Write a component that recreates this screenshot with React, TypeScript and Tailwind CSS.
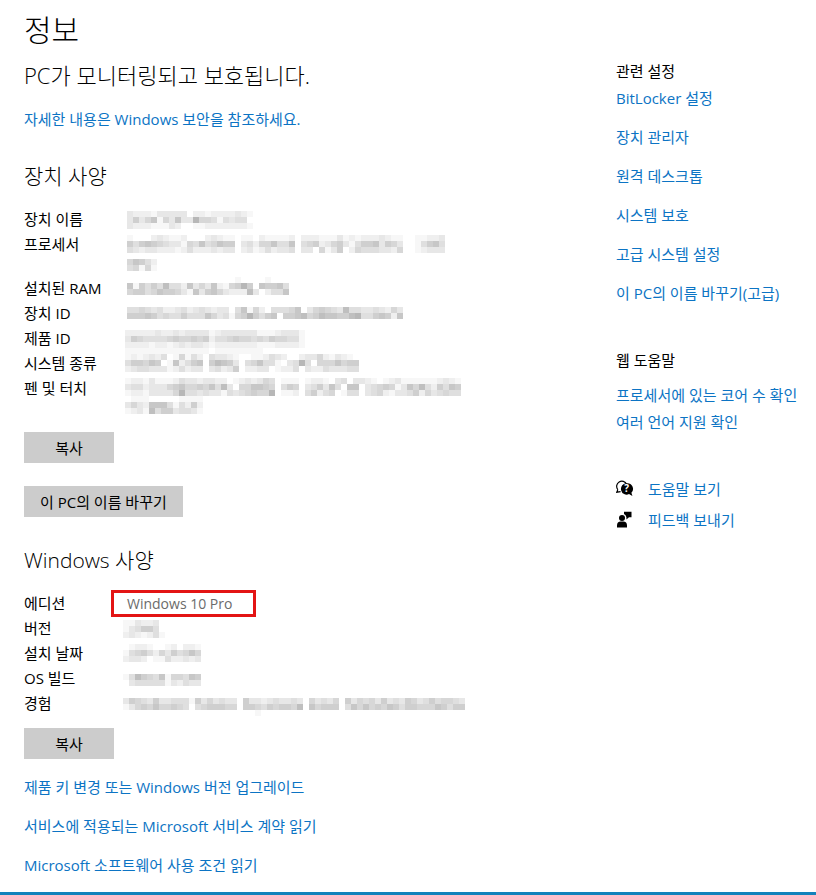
import type { ReactNode } from "react";

const CELL = 6;

interface MosaicProps {
  label: string;
  x: number;
  y: number;
  rows: string[];
}

interface SpecRow {
  name: string;
  value: ReactNode;
  tall?: boolean;
}

// Each digit is one block, 0 is empty and 9 is the darkest grey.
function Mosaic({ label, x, y, rows }: MosaicProps) {
  return (
    <svg role="img" aria-label={label} width="1" height="1" className="block overflow-visible" shapeRendering="crispEdges">
      {rows.map((row, r) =>
        row.split("").map((digit, c) => {
          const level = 255 - Number(digit) * 8;
          if (digit === "0") return null;
          return (
            <rect
              key={`${r}-${c}`}
              x={x + c * CELL}
              y={y + r * CELL}
              width={CELL}
              height={CELL}
              fill={`rgb(${level},${level},${level})`}
            />
          );
        }),
      )}
    </svg>
  );
}

const deviceSpecs: SpecRow[] = [
  {
    name: "장치 이름",
    value: (
      <Mosaic
        label="장치 이름 숨김"
        x={0}
        y={4}
        rows={["322213333302212222321", "363571537339554143440", "322211132001122222221"]}
      />
    ),
  },
  {
    name: "프로세서",
    tall: true,
    value: (
      <Mosaic
        label="프로세서 숨김"
        x={0}
        y={3}
        rows={[
          "10002321120002321101102111120222111312122232110011223",
          "64676543315474576603425574470456235631466736530014674",
          "43233222124222323302312423340330513602544433250012333",
          "",
          "57642",
          "45151",
        ]}
      />
    ),
  },
  {
    name: "설치된 RAM",
    value: (
      <Mosaic
        label="설치된 RAM 숨김"
        x={0}
        y={1}
        rows={["000000000000000000100001000", "716464844273537215696076674", "566457665317367532228302447"]}
      />
    ),
  },
  {
    name: "장치 ID",
    value: (
      <Mosaic
        label="장치 ID 숨김"
        x={0}
        y={6}
        rows={[
          "4454342234234323304715204445703565438443343253",
          "6667645446444753415696467066785687766894467627",
        ]}
      />
    ),
  },
  {
    name: "제품 ID",
    value: (
      <Mosaic
        label="제품 ID 숨김"
        x={-2}
        y={4}
        rows={[
          "222223223233331233333311123331",
          "365444456556562445655454655441",
          "222212212323321222222211122221",
          "111111111111110111111110000000",
        ]}
      />
    ),
  },
  {
    name: "시스템 종류",
    value: (
      <Mosaic
        label="시스템 종류 숨김"
        x={-2}
        y={3}
        rows={[
          "121232401514204332100112432002335213210",
          "466576017246706876304574410349405557566",
          "234433312423303423602233012240322433344",
        ]}
      />
    ),
  },
  {
    name: "펜 및 터치",
    tall: true,
    value: (
      <Mosaic
        label="펜 및 터치 숨김"
        x={-2}
        y={2}
        rows={[
          "12213111243323322012323540111012210340332101231111112321",
          "34423335675565748305577650465034637407703456513758426476",
          "12213333594434331434565590112046245014403452133462534544",
          "01110000011110",
          "3532777414262",
          "1231846634431",
        ]}
      />
    ),
  },
];

const windowsSpecs: SpecRow[] = [
  {
    name: "에디션",
    value: (
      <span className="relative block text-[14px] text-[#6b6b6b]">
        Windows 10 Pro
        <span className="absolute -left-4 -top-px h-[27px] w-[145px] border-3 border-[#e31414]" />
      </span>
    ),
  },
  { name: "버전", value: <Mosaic label="버전 숨김" x={-4} y={4} rows={["1132230", "1346640", "2321241"]} /> },
  {
    name: "설치 날짜",
    value: (
      <Mosaic label="설치 날짜 숨김" x={-4} y={3} rows={["0122100120221", "1456425364575", "2332011422323"]} />
    ),
  },
  {
    name: "OS 빌드",
    value: <Mosaic label="OS 빌드 숨김" x={-4} y={8} rows={["1486547155476", "0344444132433"]} />,
  },
  {
    name: "경험",
    value: (
      <Mosaic
        label="경험 숨김"
        x={-4}
        y={7}
        rows={[
          "365436334441635343306332343343053435063545363436534645543",
          "135657556540456665506654656658075666047575657646655576466",
          "000000000000000000000010",
        ]}
      />
    ),
  },
];

const relatedLinks = ["BitLocker 설정", "장치 관리자", "원격 데스크톱", "시스템 보호", "고급 시스템 설정", "이 PC의 이름 바꾸기(고급)"];
const webLinks = ["프로세서에 있는 코어 수 확인", "여러 언어 지원 확인"];
const licenseLinks = [
  "제품 키 변경 또는 Windows 버전 업그레이드",
  "서비스에 적용되는 Microsoft 서비스 계약 읽기",
  "Microsoft 소프트웨어 사용 조건 읽기",
];

function TextLink({ children }: { children: ReactNode }) {
  return (
    <a href="#" className="text-[#0c74c4] hover:text-[#666666]">
      {children}
    </a>
  );
}

function SpecList({ rows }: { rows: SpecRow[] }) {
  return (
    <dl className="mt-[18px] leading-[25px]">
      {rows.map((row) => (
        <div key={row.name} className={row.tall ? "flex h-11" : "flex h-[25px]"}>
          <dt className="w-[103px] shrink-0">{row.name}</dt>
          <dd>{row.value}</dd>
        </div>
      ))}
    </dl>
  );
}

function ActionButton({ children }: { children: ReactNode }) {
  return (
    <button type="button" className="block h-[31px] min-w-[90px] bg-[#cccccc] px-4 hover:bg-[#bbbbbb]">
      {children}
    </button>
  );
}

function HelpIcon() {
  return (
    <svg width="18" height="18" viewBox="0 0 18 18" aria-hidden="true">
      <path
        d="M1.8 9.6A5.2 5.2 0 1 1 10.6 4.2M1.8 9.6L.8 12.2L4.6 11.6"
        fill="none"
        stroke="#000"
        strokeWidth="1.2"
      />
      <path d="M10.6 3.2a5.7 5.7 0 1 0 2.4 10.9L16.4 16l-1-3.2A5.7 5.7 0 0 0 10.6 3.2z" fill="#000" />
      <text x="10.6" y="12.4" textAnchor="middle" fontSize="10" fontWeight="700" fill="#fff">
        ?
      </text>
    </svg>
  );
}

function FeedbackIcon() {
  return (
    <svg width="18" height="18" viewBox="0 0 18 18" aria-hidden="true">
      <path d="M8 .8h7.5v5.4H13L10.4 8.6V6.2A4.6 4.6 0 0 0 8 3z" />
      <circle cx="6" cy="7" r="3" />
      <path d="M1 16.4v-2A3.8 3.8 0 0 1 4.8 10.6h2.4a3.8 3.8 0 0 1 3.8 3.8v2z" />
    </svg>
  );
}

export default function App() {
  return (
    <div className="bg-white font-['Open_Sans','Noto_Sans_CJK_KR',sans-serif] text-[15px] leading-6 text-black">
      <div className="flex pl-6 pt-3">
        <main className="min-w-0 flex-1">
          <h1 className="text-[30px] font-light leading-9">정보</h1>
          <h2 className="mt-3.5 text-[22px] font-light leading-[26px]">PC가 모니터링되고 보호됩니다.</h2>
          <p className="mt-[19px]">
            <TextLink>자세한 내용은 Windows 보안을 참조하세요.</TextLink>
          </p>

          <h2 className="mt-8 text-[21px] font-light leading-[26px]">장치 사양</h2>
          <SpecList rows={deviceSpecs} />
          <div className="mt-3 space-y-[23px]">
            <ActionButton>복사</ActionButton>
            <ActionButton>이 PC의 이름 바꾸기</ActionButton>
          </div>

          <h2 className="mt-[30px] text-[21px] font-light leading-[26px]">Windows 사양</h2>
          <SpecList rows={windowsSpecs} />
          <div className="mt-3">
            <ActionButton>복사</ActionButton>
          </div>
          <ul className="mt-4 space-y-[15px]">
            {licenseLinks.map((text) => (
              <li key={text}>
                <TextLink>{text}</TextLink>
              </li>
            ))}
          </ul>
        </main>

        <aside className="w-[200px] shrink-0 whitespace-nowrap pt-[47px]">
          <h3>관련 설정</h3>
          <ul className="mt-[3px] space-y-[15px]">
            {relatedLinks.map((text) => (
              <li key={text}>
                <TextLink>{text}</TextLink>
              </li>
            ))}
          </ul>

          <h3 className="mt-[43px]">웹 도움말</h3>
          <ul className="mt-[11px] space-y-[3px]">
            {webLinks.map((text) => (
              <li key={text}>
                <TextLink>{text}</TextLink>
              </li>
            ))}
          </ul>

          <ul className="mt-[43px] space-y-[7px]">
            <li className="flex items-center gap-3.5">
              <HelpIcon />
              <TextLink>도움말 보기</TextLink>
            </li>
            <li className="flex items-center gap-3.5">
              <FeedbackIcon />
              <TextLink>피드백 보내기</TextLink>
            </li>
          </ul>
        </aside>
      </div>
      <div className="mt-[15px] h-[3px] bg-[#1382bb]" />
    </div>
  );
}
